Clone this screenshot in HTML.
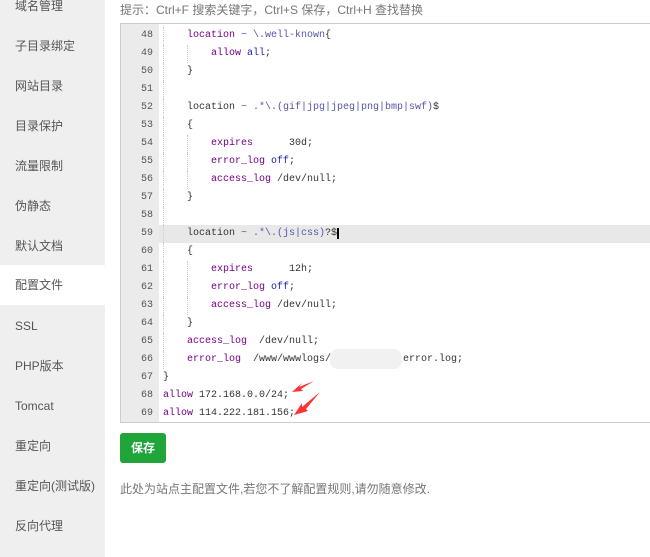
<!DOCTYPE html>
<html><head><meta charset="utf-8"><style>
*{margin:0;padding:0;box-sizing:border-box}
body{width:650px;height:557px;overflow:hidden;background:#fff;font-family:"Liberation Sans","Noto Sans CJK SC",sans-serif;position:relative}
.side{position:absolute;left:0;top:0;width:105px;height:557px;background:#efefef}
.side div{position:absolute;left:15px;font-size:12px;color:#555;line-height:16px}
.side .on{left:0;width:105px;background:#fff;padding-left:15px;height:40px;line-height:40px}
.tip{position:absolute;left:120px;top:1px;font-size:12px;color:#777}
.ed{position:absolute;left:120px;top:23px;width:540px;height:400px;border:1px solid #ccc;border-right:none;background:#fff;overflow:hidden}
.gut{position:absolute;left:0;top:0;width:38px;height:400px;background:#ebebeb}
.ln{position:absolute;left:0;width:540px;height:18px;line-height:18px;font-family:"Liberation Mono",monospace;font-size:10px;color:#333;white-space:pre}
.ln .n{position:absolute;left:0;width:32px;text-align:right;color:#555}
.ln .c{position:absolute;left:42px}
.hl{background:#e8e8e8}
.hl .n{background:#ebebeb;width:38px;padding-right:6px}
.k{color:#708}.b{color:#55a}.v{color:#22a}
.g{display:inline-block;width:24px;height:18px;vertical-align:top;position:relative}
.g:before{content:"";position:absolute;left:0;top:0;height:18px;border-left:1px dotted #ccc}
.btn{position:absolute;left:120px;top:433px;width:46px;height:30px;background:#20a53a;border-radius:3px;color:#fff;font-size:12px;font-weight:bold;text-align:center;line-height:30px}
.note{position:absolute;left:120px;top:480px;font-size:12px;color:#777}
.blur{position:absolute;left:330px;top:349px;width:72px;height:20px;background:#f1f1f1;border-radius:8px}
</style></head><body>
<div class="side">
<div style="top:-2px">域名管理</div>
<div style="top:38px">子目录绑定</div>
<div style="top:78px">网站目录</div>
<div style="top:118px">目录保护</div>
<div style="top:158px">流量限制</div>
<div style="top:198px">伪静态</div>
<div style="top:238px">默认文档</div>
<div class="on" style="top:265px">配置文件</div>
<div style="top:318px">SSL</div>
<div style="top:358px">PHP版本</div>
<div style="top:398px">Tomcat</div>
<div style="top:438px">重定向</div>
<div style="top:478px">重定向(测试版)</div>
<div style="top:518px">反向代理</div>
</div>
<div class="tip">提示：Ctrl+F 搜索关键字，Ctrl+S 保存，Ctrl+H 查找替换</div>
<div class="ed"><div class="gut"></div>
<div class="ln" style="top:3px"><span class="n">48</span><span class="c"><span class="g"></span><span class="k">location</span> <span class="b">~ \.well-known</span>{</span></div>
<div class="ln" style="top:21px"><span class="n">49</span><span class="c"><span class="g"></span><span class="g"></span><span class="k">allow</span> <span class="v">all</span>;</span></div>
<div class="ln" style="top:39px"><span class="n">50</span><span class="c"><span class="g"></span>}</span></div>
<div class="ln" style="top:57px"><span class="n">51</span><span class="c"><span class="g"></span></span></div>
<div class="ln" style="top:75px"><span class="n">52</span><span class="c"><span class="g"></span>location <span class="b">~ .*\.(gif|jpg|jpeg|png|bmp|swf)</span>$</span></div>
<div class="ln" style="top:93px"><span class="n">53</span><span class="c"><span class="g"></span>{</span></div>
<div class="ln" style="top:111px"><span class="n">54</span><span class="c"><span class="g"></span><span class="g"></span><span class="k">expires</span>      30d;</span></div>
<div class="ln" style="top:129px"><span class="n">55</span><span class="c"><span class="g"></span><span class="g"></span><span class="k">error_log</span> <span class="v">off</span>;</span></div>
<div class="ln" style="top:147px"><span class="n">56</span><span class="c"><span class="g"></span><span class="g"></span><span class="k">access_log</span> /dev/null;</span></div>
<div class="ln" style="top:165px"><span class="n">57</span><span class="c"><span class="g"></span>}</span></div>
<div class="ln" style="top:183px"><span class="n">58</span><span class="c"><span class="g"></span></span></div>
<div class="ln hl" style="top:201px"><span class="n">59</span><span class="c"><span class="g"></span>location <span class="b">~ .*\.(js|css)</span>?$<span style="border-left:2px solid #000"></span></span></div>
<div class="ln" style="top:219px"><span class="n">60</span><span class="c"><span class="g"></span>{</span></div>
<div class="ln" style="top:237px"><span class="n">61</span><span class="c"><span class="g"></span><span class="g"></span><span class="k">expires</span>      12h;</span></div>
<div class="ln" style="top:255px"><span class="n">62</span><span class="c"><span class="g"></span><span class="g"></span><span class="k">error_log</span> <span class="v">off</span>;</span></div>
<div class="ln" style="top:273px"><span class="n">63</span><span class="c"><span class="g"></span><span class="g"></span><span class="k">access_log</span> /dev/null;</span></div>
<div class="ln" style="top:291px"><span class="n">64</span><span class="c"><span class="g"></span>}</span></div>
<div class="ln" style="top:309px"><span class="n">65</span><span class="c"><span class="g"></span><span class="k">access_log</span>  /dev/null;</span></div>
<div class="ln" style="top:327px"><span class="n">66</span><span class="c"><span class="g"></span><span class="k">error_log</span>  /www/wwwlogs/          n.error.log;</span></div>
<div class="ln" style="top:345px"><span class="n">67</span><span class="c">}</span></div>
<div class="ln" style="top:363px"><span class="n">68</span><span class="c"><span class="k">allow</span> 172.168.0.0/24;</span></div>
<div class="ln" style="top:381px"><span class="n">69</span><span class="c"><span class="k">allow</span> 114.222.181.156;</span></div>
</div>
<div class="blur"></div>
<svg style="position:absolute;left:280px;top:378px" width="45" height="45" viewBox="0 0 45 45">
<path d="M12 14 L22 5 L19 9 L34 3 L21 11 L23 13 Z" fill="#f33"/>
<path d="M14 37 L22 25 L22 29 L40 14 L26 31 L28 33 Z" fill="#f33"/>
</svg>
<div class="btn">保存</div>
<div class="note">此处为站点主配置文件,若您不了解配置规则,请勿随意修改.</div>
</body></html>
